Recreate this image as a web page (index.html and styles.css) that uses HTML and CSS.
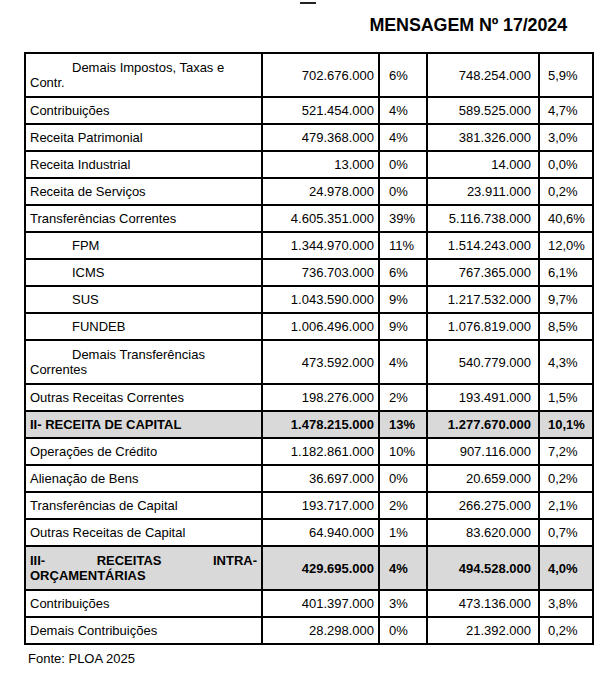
FILE: index.html
```html
<!DOCTYPE html>
<html lang="pt">
<head>
<meta charset="utf-8">
<link rel="stylesheet" href="styles.css">
</head>
<body>
<div class="page">
  <div class="topmark"></div>
  <h1 class="title">MENSAGEM Nº 17/2024</h1>
  <table class="grid">
    <colgroup>
      <col class="c-label"><col class="c-val"><col class="c-pct"><col class="c-val2"><col class="c-pct2">
    </colgroup>
    <tbody>
      <tr class="dbl"><td class="lbl ind">Demais Impostos, Taxas e Contr.</td><td class="num">702.676.000</td><td class="pct">6%</td><td class="num2">748.254.000</td><td class="pct2">5,9%</td></tr>
      <tr><td class="lbl">Contribuições</td><td class="num">521.454.000</td><td class="pct">4%</td><td class="num2">589.525.000</td><td class="pct2">4,7%</td></tr>
      <tr><td class="lbl">Receita Patrimonial</td><td class="num">479.368.000</td><td class="pct">4%</td><td class="num2">381.326.000</td><td class="pct2">3,0%</td></tr>
      <tr><td class="lbl">Receita Industrial</td><td class="num">13.000</td><td class="pct">0%</td><td class="num2">14.000</td><td class="pct2">0,0%</td></tr>
      <tr><td class="lbl">Receita de Serviços</td><td class="num">24.978.000</td><td class="pct">0%</td><td class="num2">23.911.000</td><td class="pct2">0,2%</td></tr>
      <tr><td class="lbl">Transferências Correntes</td><td class="num">4.605.351.000</td><td class="pct">39%</td><td class="num2">5.116.738.000</td><td class="pct2">40,6%</td></tr>
      <tr><td class="lbl ind">FPM</td><td class="num">1.344.970.000</td><td class="pct">11%</td><td class="num2">1.514.243.000</td><td class="pct2">12,0%</td></tr>
      <tr><td class="lbl ind">ICMS</td><td class="num">736.703.000</td><td class="pct">6%</td><td class="num2">767.365.000</td><td class="pct2">6,1%</td></tr>
      <tr><td class="lbl ind">SUS</td><td class="num">1.043.590.000</td><td class="pct">9%</td><td class="num2">1.217.532.000</td><td class="pct2">9,7%</td></tr>
      <tr><td class="lbl ind">FUNDEB</td><td class="num">1.006.496.000</td><td class="pct">9%</td><td class="num2">1.076.819.000</td><td class="pct2">8,5%</td></tr>
      <tr class="dbl"><td class="lbl ind">Demais Transferências Correntes</td><td class="num">473.592.000</td><td class="pct">4%</td><td class="num2">540.779.000</td><td class="pct2">4,3%</td></tr>
      <tr><td class="lbl">Outras Receitas Correntes</td><td class="num">198.276.000</td><td class="pct">2%</td><td class="num2">193.491.000</td><td class="pct2">1,5%</td></tr>
      <tr class="total"><td class="lbl">II- RECEITA DE CAPITAL</td><td class="num">1.478.215.000</td><td class="pct">13%</td><td class="num2">1.277.670.000</td><td class="pct2">10,1%</td></tr>
      <tr><td class="lbl">Operações de Crédito</td><td class="num">1.182.861.000</td><td class="pct">10%</td><td class="num2">907.116.000</td><td class="pct2">7,2%</td></tr>
      <tr><td class="lbl">Alienação de Bens</td><td class="num">36.697.000</td><td class="pct">0%</td><td class="num2">20.659.000</td><td class="pct2">0,2%</td></tr>
      <tr><td class="lbl">Transferências de Capital</td><td class="num">193.717.000</td><td class="pct">2%</td><td class="num2">266.275.000</td><td class="pct2">2,1%</td></tr>
      <tr><td class="lbl">Outras Receitas de Capital</td><td class="num">64.940.000</td><td class="pct">1%</td><td class="num2">83.620.000</td><td class="pct2">0,7%</td></tr>
      <tr class="total dbl"><td class="lbl just">III- RECEITAS INTRA-ORÇAMENTÁRIAS</td><td class="num">429.695.000</td><td class="pct">4%</td><td class="num2">494.528.000</td><td class="pct2">4,0%</td></tr>
      <tr><td class="lbl">Contribuições</td><td class="num">401.397.000</td><td class="pct">3%</td><td class="num2">473.136.000</td><td class="pct2">3,8%</td></tr>
      <tr><td class="lbl">Demais Contribuições</td><td class="num">28.298.000</td><td class="pct">0%</td><td class="num2">21.392.000</td><td class="pct2">0,2%</td></tr>
    </tbody>
  </table>
  <p class="source">Fonte: PLOA 2025</p>
</div>
</body>
</html>
```

FILE: styles.css
```css
* { box-sizing: border-box; }
html, body { margin: 0; padding: 0; background: #fff; }
body {
  font-family: "Liberation Sans", Arial, sans-serif;
  color: #000;
  width: 610px;
  height: 674px;
  overflow: hidden;
}
.page {
  position: relative;
  padding: 0 18px 0 24px;
}
.topmark {
  position: absolute;
  left: 300px;
  top: 2px;
  width: 16px;
  height: 1.5px;
  background: #222;
}
.title {
  margin: 0;
  padding-top: 14px;
  height: 52px;
  text-align: right;
  padding-right: 25px;
  font-size: 17.9px;
  font-weight: bold;
  line-height: 22px;
  letter-spacing: -0.1px;
}
.grid {
  border-collapse: collapse;
  table-layout: fixed;
  width: 568px;
  font-size: 13px;
  line-height: 15px;
}
.c-label { width: 237px; }
.c-val { width: 117px; }
.c-pct { width: 48px; }
.c-val2 { width: 112px; }
.c-pct2 { width: 54px; }
.grid td {
  border: 2px solid #000;
  height: 27px;
  padding: 0;
  vertical-align: middle;
  white-space: nowrap;
}
.grid tr.dbl td { height: 44px; }
.grid td.lbl { padding-left: 4px; white-space: normal; }
.grid td.ind { text-indent: 42px; }
.grid td.just { text-align: justify; padding-right: 4px; }
.grid td.num { text-align: right; padding-right: 4px; }
.grid td.num2 { text-align: right; padding-right: 7px; }
.grid td.pct { padding-left: 9px; }
.grid td.pct2 { padding-left: 8px; }
.grid tr.total td { background: #d9d9d9; font-weight: bold; }
.source {
  margin: 6px 0 0 4px;
  font-size: 13px;
  line-height: 15px;
}
```
